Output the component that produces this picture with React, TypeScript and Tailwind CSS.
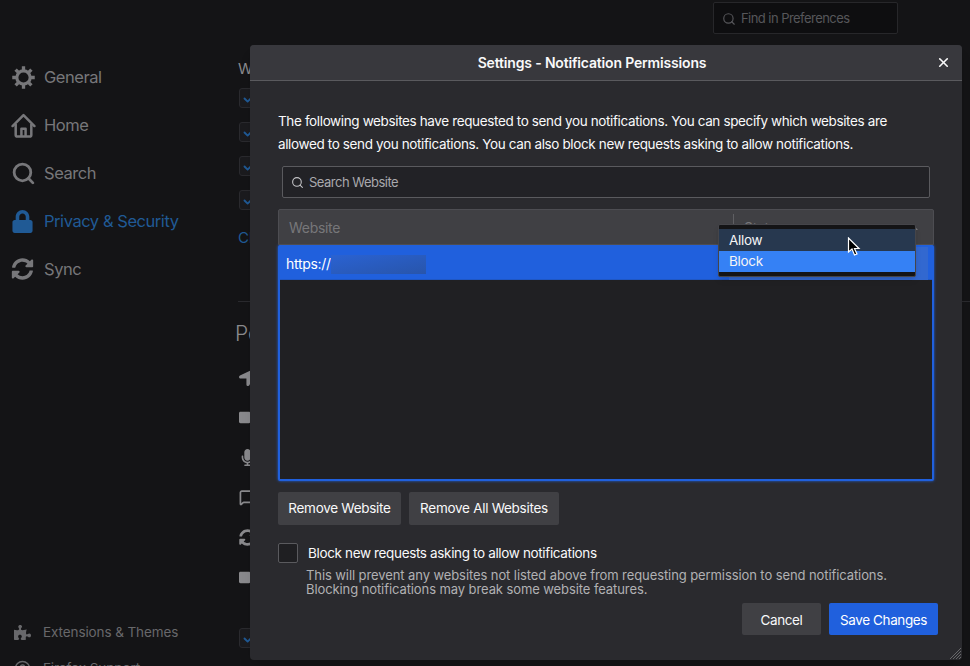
import { X, Search, Check, MessageSquare, HelpCircle } from 'lucide-react';
import { FaLock, FaSyncAlt, FaPuzzlePiece, FaLocationArrow, FaVideo, FaMicrophone } from 'react-icons/fa';

function GearIcon() {
  return (
    <svg className="h-[25px] w-[25px]" viewBox="0 0 24 24" fill="none" stroke="currentColor">
      <circle cx="12" cy="12" r="6.4" strokeWidth="3" />
      <path d="M12 1.2V5 M12 19v3.8 M1.2 12H5 M19 12h3.8 M4.4 4.4l2.7 2.7 M16.9 16.9l2.7 2.7 M4.4 19.6l2.7-2.7 M16.9 7.1l2.7-2.7" strokeWidth="3.2" />
    </svg>
  );
}

function HomeIcon() {
  return (
    <svg className="h-[25px] w-[25px]" viewBox="0 0 24 24" fill="none" stroke="currentColor" strokeWidth="2.4" strokeLinejoin="round">
      <path d="M1.5 12.5 12 2l10.5 10.5" strokeLinecap="round" />
      <path d="M4.5 10.5V21a1.5 1.5 0 0 0 1.5 1.5h12a1.5 1.5 0 0 0 1.5-1.5V10.5" />
      <path d="M10 22v-7h4v7" />
    </svg>
  );
}

function SearchIcon() {
  return <Search className="h-[25px] w-[25px]" strokeWidth={2.7} />;
}

function LockIcon() {
  return <FaLock className="h-[23px] w-[23px]" />;
}

function SyncIcon() {
  return <FaSyncAlt className="h-[22px] w-[23px]" />;
}

const navItems = [
  { label: 'General', icon: GearIcon },
  { label: 'Home', icon: HomeIcon },
  { label: 'Search', icon: SearchIcon },
  { label: 'Privacy & Security', icon: LockIcon, active: true },
  { label: 'Sync', icon: SyncIcon },
];

function Sidebar() {
  return (
    <div className="flex h-full w-[234px] shrink-0 flex-col pl-[10px] pt-[53px]">
      {navItems.map((item) => {
        const Icon = item.icon;
        return (
          <div
            key={item.label}
            className={`flex h-[48px] shrink-0 items-center text-[16.5px] tracking-[-0.45px] ${item.active ? 'text-[#205a95]' : 'text-[#77777a]'}`}
          >
            <div className="flex w-[34px] justify-start pl-[1px]">
              <Icon />
            </div>
            <span>{item.label}</span>
          </div>
        );
      })}
      <div className="mt-[327px] flex h-[24px] shrink-0 items-center gap-[12px] pl-[4px] text-[13.5px] tracking-[-0.1px] text-[#68686b]">
        <FaPuzzlePiece className="h-[17px] w-[17px]" />
        <span>Extensions &amp; Themes</span>
      </div>
      <div className="mt-[12px] flex h-[24px] shrink-0 items-center gap-[12px] pl-[4px] text-[13.5px] tracking-[-0.1px] text-[#68686b]">
        <HelpCircle className="h-[17px] w-[17px]" />
        <span>Firefox Support</span>
      </div>
    </div>
  );
}

function BackCheck() {
  return (
    <div className="flex h-[20px] w-[20px] shrink-0 items-center justify-center rounded-[3px] border border-[#2a2a2e] bg-[#1b1b1e]">
      <Check className="h-[15px] w-[15px] text-[#205a95]" strokeWidth={3} />
    </div>
  );
}

function BackgroundContent() {
  return (
    <div className="flex h-full min-w-0 flex-1 flex-col overflow-hidden pl-[4px] pt-[60px] text-[#8a8a8d]">
      <div className="text-[15px] leading-[18px]">Website</div>
      <div className="mt-[10px] flex flex-col gap-[14px] pl-[1px]">
        <BackCheck />
        <BackCheck />
        <BackCheck />
        <BackCheck />
      </div>
      <div className="mt-[19px] text-[15px] leading-[18px] text-[#205a95]">Change</div>
      <div className="mt-[54px] h-px w-full bg-[#2a2a2e]" />
      <div className="-ml-[3px] mt-[20px] text-[21px] font-light leading-[24px]">Permissions</div>
      <div className="mt-[23px] flex flex-col gap-[23px] pl-[1px]">
        <FaLocationArrow className="h-[17px] w-[17px]" />
        <FaVideo className="h-[17px] w-[17px]" />
        <FaMicrophone className="h-[17px] w-[17px]" />
        <MessageSquare className="h-[17px] w-[17px]" strokeWidth={2.4} />
        <FaSyncAlt className="h-[17px] w-[17px]" />
        <FaVideo className="h-[17px] w-[17px]" />
      </div>
      <div className="mt-[42px] pl-[1px]">
        <BackCheck />
      </div>
    </div>
  );
}

function StatusDropdown() {
  return (
    <div className="absolute left-[468px] top-[179px] z-10 w-[198px] rounded-[2px] border border-[#45454a] bg-[#141416] py-[4px] text-[13.5px] tracking-[-0.3px] text-[#f4f4f5] shadow-md">
      <div className="flex h-[21.5px] items-center bg-[#27384f] pl-[10px]">Allow</div>
      <div className="flex h-[21.5px] items-center bg-[#3581f5] pl-[10px]">Block</div>
    </div>
  );
}

function Cursor() {
  return (
    <svg className="absolute left-[597px] top-[192px] z-20" width="14" height="20" viewBox="0 0 14 20">
      <path d="M1.5 1 L1.5 15 L5 12 L7.5 18 L10 17 L7.5 11.5 L12 11.5 Z" fill="#000" stroke="#fff" strokeWidth="1.2" />
    </svg>
  );
}

function Dialog() {
  return (
    <div className="absolute left-[250px] top-[45px] flex h-[615px] w-[712px] flex-col rounded-[4px] bg-[#2a2a2e] text-[#f9f9fa] shadow-lg">
      <div className="relative flex h-[36px] shrink-0 items-center justify-center rounded-t-[4px] border-b border-[#5a5a5e] bg-[#38383d] pr-[28px] text-[14px] font-semibold tracking-[-0.17px]">
        <span>Settings - Notification Permissions</span>
        <X className="absolute right-[11px] top-[10px] h-[15px] w-[15px]" strokeWidth={2.6} />
      </div>

      <div className="flex min-h-0 flex-1 flex-col pl-[28px] pr-[28px]">
        <p className="mt-[29px] w-[640px] text-[13.5px] leading-[23px] tracking-[-0.37px]">
          The following websites have requested to send you notifications. You can specify which websites are allowed to send you notifications. You can also block new requests asking to allow notifications.
        </p>

        <div className="ml-[4px] mt-[10px] flex h-[32px] w-[648px] items-center gap-[5px] rounded-[2px] border border-[#5a5a5e] bg-[#222226] pl-[8px] pt-[1px] text-[13px] tracking-[-0.5px] text-[#a9a9ad]">
          <Search className="h-[13px] w-[13px] text-[#c4c4c7]" strokeWidth={2} />
          <span>Search Website</span>
        </div>

        <div className="relative mt-[11px] flex h-[36px] w-[656px] items-center rounded-t-[2px] border border-[#4d4d52] bg-[#404044] text-[14px] tracking-[-0.3px] text-[#77777a]">
          <div className="w-[454px] pl-[10px]">Website</div>
          <div className="flex h-[26px] flex-1 items-center border-l border-[#5f5f63] pl-[10px]">Status</div>
          <svg className="absolute right-[15px] top-[16px]" width="7" height="4" viewBox="0 0 7 4">
            <path d="M3.5 0 7 4H0z" fill="#77777a" />
          </svg>
        </div>

        <div className="h-[236px] w-[656px] rounded-[2px] border-2 border-[#2060dd] bg-[#202023] shadow-[0_0_3px_#2060dd]">
          <div className="flex h-[33px] items-center border-b border-[#1f57c4] bg-[#2060dd] pl-[6px] text-[14px] tracking-[-0.3px] text-white">
            <span>https://</span>
            <span className="h-[19px] w-[95px] translate-y-[1px] bg-gradient-to-br from-[#2a62d2] to-[#2855ab]" />
            <span className="ml-auto mr-[4px] h-[33px] w-[199px] bg-[#3268d0]" />
          </div>
        </div>

        <div className="mt-[11px] flex gap-[8px] text-[13.5px] tracking-[-0.28px]">
          <div className="flex h-[33px] w-[123px] items-center justify-center rounded-[2px] bg-[#404044]">Remove Website</div>
          <div className="flex h-[33px] w-[150px] items-center justify-center rounded-[2px] bg-[#404044]">Remove All Websites</div>
        </div>

        <div className="mt-[18px] flex items-center gap-[10px]">
          <div className="h-[20px] w-[20px] rounded-[2px] border border-[#5a5a5e] bg-[#1f1f22]" />
          <span className="text-[13.5px] tracking-[-0.35px]">Block new requests asking to allow notifications</span>
        </div>

        <p className="ml-[28px] mt-[5px] text-[13px] leading-[14px] tracking-[-0.09px] text-[#b1b1b3]">
          This will prevent any websites not listed above from requesting permission to send notifications.
          <br />
          Blocking notifications may break some website features.
        </p>

        <div className="-mr-[4px] mt-[7px] flex justify-end gap-[8px] text-[13.5px] tracking-[-0.38px]">
          <div className="flex h-[32px] w-[79px] items-center justify-center rounded-[2px] bg-[#404044] pt-[1px]">Cancel</div>
          <div className="flex h-[32px] w-[109px] items-center justify-center rounded-[2px] bg-[#2060dd] pt-[1px] text-white">Save Changes</div>
        </div>
      </div>

      <svg className="absolute bottom-[1px] right-[1px]" width="12" height="12" viewBox="0 0 12 12">
        <path d="M12 1 L1 12 M12 4 L4 12 M12 7 L7 12 M12 10 L10 12" stroke="#77777a" strokeWidth="0.8" />
      </svg>

      <StatusDropdown />
      <Cursor />
    </div>
  );
}

export default function App() {
  return (
    <div className="relative flex h-[666px] w-[970px] overflow-hidden bg-[#141416] font-['Inter',sans-serif]">
      <Sidebar />
      <BackgroundContent />
      <div className="absolute left-[713px] top-[2px] flex h-[32px] w-[185px] items-center gap-[5px] rounded-[2px] border border-[#27272a] bg-[#0e0e10] pl-[8px] pt-[1px] text-[13px] tracking-[-0.55px] text-[#56565a]">
        <Search className="h-[14px] w-[14px]" />
        <span>Find in Preferences</span>
      </div>
      <Dialog />
    </div>
  );
}
